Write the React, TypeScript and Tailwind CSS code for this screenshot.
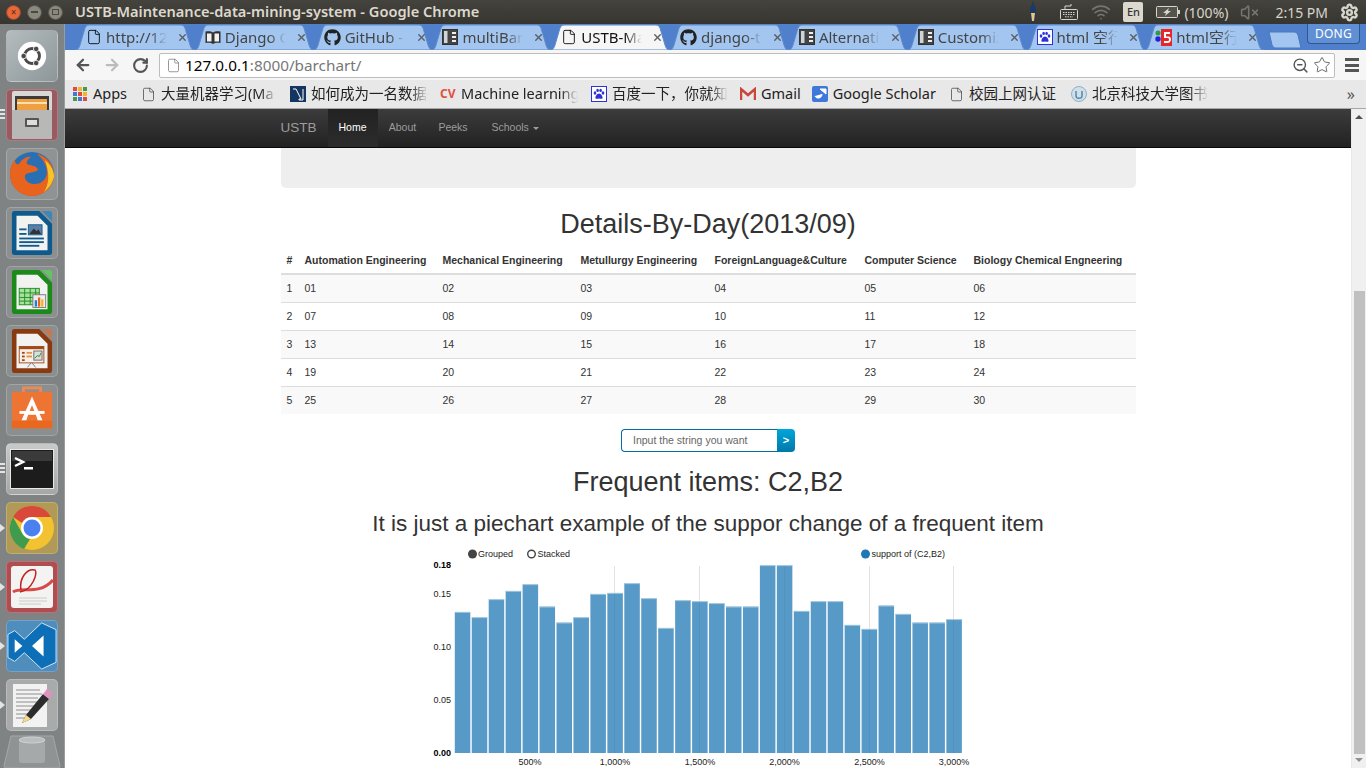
import type { ReactNode } from "react";
import { ArrowLeft, ArrowRight, RotateCw, Star, ZoomOut, File, Wifi, X, VolumeX, Settings } from "lucide-react";
import { FaGithub } from "react-icons/fa";

const uiFont = "font-['Noto_Sans','Noto_Sans_CJK_SC',sans-serif]";
const pageFont = "font-['Liberation_Sans',Arial,sans-serif]";

function Columns() {
  return (
    <svg width="16" height="16" viewBox="0 0 16 16" className="shrink-0">
      <rect x="0.5" y="0.5" width="15" height="15" fill="#444" stroke="#333" />
      <rect x="2" y="2" width="3.5" height="12" fill="#cfd4d8" />
      <rect x="10" y="3" width="4" height="2" fill="#eee" />
      <rect x="10" y="7" width="4" height="2" fill="#eee" />
      <rect x="10" y="11" width="4" height="2" fill="#eee" />
    </svg>
  );
}

function Book() {
  return (
    <svg width="16" height="16" viewBox="0 0 16 16" className="shrink-0">
      <path d="M8 3.500C6 2 3.500 2 0.500 2.500V14C3.500 13.500 6 13.500 8 15C10 13.500 12.500 13.500 15.500 14V2.500C12.500 2 10 2 8 3.500Z" fill="#333" />
      <path d="M2 4.500H6.500V12.500H2ZM9.500 4.500H14V12.500H9.500Z" fill="#f2f2f2" />
    </svg>
  );
}

function Paw({ size = 16 }: { size?: number }) {
  return (
    <svg width={size} height={size} viewBox="0 0 16 16" className="shrink-0">
      <rect x="0.500" y="0.500" width="15" height="15" fill="#fff" stroke="#2a32d8" />
      <g fill="#2a32d8">
        <ellipse cx="4" cy="7" rx="1.300" ry="1.700" />
        <ellipse cx="6.600" cy="4.400" rx="1.300" ry="1.700" />
        <ellipse cx="9.600" cy="4.400" rx="1.300" ry="1.700" />
        <ellipse cx="12" cy="7" rx="1.300" ry="1.700" />
        <path d="M8 7.500c2 0 4 3 3.500 4.500S9 12.500 8 12.500 5 13.500 4.500 12 6 7.500 8 7.500z" />
      </g>
    </svg>
  );
}

function Html5() {
  return (
    <svg width="17" height="17" viewBox="0 0 17 17" className="shrink-0">
      <rect x="6" y="0" width="11" height="17" fill="#e8262a" />
      <path d="M9 3h6v2h-4v2.500h2.500c2 0 2.500 1.500 2.500 3s-1 3.500-3.500 3.500H9v-2h3.500c1 0 1.500-.5 1.500-1.500s-.5-1.500-1.500-1.500H9z" fill="#fff" />
      <circle cx="3" cy="4" r="2.500" fill="#2d9e3c" />
      <circle cx="3" cy="10" r="2.700" fill="#2222dd" />
    </svg>
  );
}

const tabs: { icon: ReactNode; title: string; active?: boolean }[] = [
  { icon: <File size={16} strokeWidth={1.300} className="shrink-0" />, title: "http://12" },
  { icon: <Book />, title: "Django O" },
  { icon: <FaGithub size={17} className="shrink-0 text-[#222]" />, title: "GitHub - a" },
  { icon: <Columns />, title: "multiBarC" },
  { icon: <File size={16} strokeWidth={1.300} className="shrink-0" />, title: "USTB-Mai", active: true },
  { icon: <FaGithub size={17} className="shrink-0 text-[#222]" />, title: "django-ta" },
  { icon: <Columns />, title: "Alternativ" },
  { icon: <Columns />, title: "Customiz" },
  { icon: <Paw />, title: "html 空行" },
  { icon: <Html5 />, title: "html空行" },
];

function Tab({ icon, title, active }: { icon: ReactNode; title: string; active?: boolean }) {
  return (
    <div className={`relative h-[26px] w-[120px] -mr-[1.200px] shrink-0 flex items-center pl-[11px] ${active ? "z-10" : ""}`}>
      <svg className="absolute inset-0" width="120" height="26" viewBox="0 0 120 26">
        <path
          d="M0 26C3 26 4 24 5 21L10 4C11 2 12 1 14 1H106C108 1 109 2 110 4L115 21C116 24 117 26 120 26Z"
          fill={active ? "#f6f6f6" : "#a3c6f1"}
          stroke="#5f8ac8"
        />
      </svg>
      <div className="relative flex items-center gap-[4px]">
        {icon}
        <span
          className={`w-[61px] overflow-hidden whitespace-nowrap text-[15px] [mask-image:linear-gradient(90deg,#000_72%,transparent)] ${active ? "text-[#111]" : "text-[#444]"}`}
        >
          {title}
        </span>
      </div>
      <X size={11} strokeWidth={3} className="relative ml-[10px] text-[#5a5f66]" />
    </div>
  );
}

function Bookmark({ icon, label, w, ml }: { icon: ReactNode; label: string; w?: string; ml?: string }) {
  return (
    <div className={`flex items-center gap-[5px] shrink-0 ${ml ?? ""}`}>
      {icon}
      <span className={`whitespace-nowrap overflow-hidden text-[14.500px] text-[#222] ${w ?? ""} ${w ? "[mask-image:linear-gradient(90deg,#000_85%,transparent)]" : ""}`}>
        {label}
      </span>
    </div>
  );
}

function Tile({ bg, pip, arrow, children }: { bg: string; pip?: boolean; arrow?: boolean; children: ReactNode }) {
  return (
    <div className="relative">
      <div className={`w-[52px] h-[52px] rounded-[5px] border border-white/20 flex items-center justify-center overflow-hidden ${bg}`}>{children}</div>
      {arrow && <div className="absolute -left-[6px] top-[22px] w-0 h-0 border-y-[4px] border-y-transparent border-l-[5px] border-l-[#e4e4e4]" />}
      {pip && (
        <div className="absolute -left-[6px] top-[20px] flex flex-col gap-[2px]">
          <div className="w-[5px] h-[2px] bg-[#e4e4e4]" />
          <div className="w-[5px] h-[2px] bg-[#e4e4e4]" />
          <div className="w-[5px] h-[2px] bg-[#e4e4e4]" />
        </div>
      )}
    </div>
  );
}

function OfficeDoc({ color, corner, children }: { color: string; corner: string; children: ReactNode }) {
  return (
    <svg width="42" height="50" viewBox="0 0 46 50">
      <path d="M4 1H31L45 15V46Q45 49 42 49H4Q1 49 1 46V4Q1 1 4 1Z" fill={color} />
      <path d="M6 6H29L40 17V44H6Z" fill="#f2f2f0" />
      <path d="M34 1H42Q45 1 45 4V12Z" fill={corner} />
      {children}
    </svg>
  );
}

function Launcher() {
  return (
    <aside className="w-[65px] shrink-0 h-full bg-[#7f8384] border-r border-[#9a9d9d] flex flex-col items-center pt-[6px] gap-[7px] relative">
      <Tile bg="bg-gradient-to-br from-[#b4bcbe] to-[#8d9698]">
        <svg width="30" height="30" viewBox="0 0 36 36">
          <circle cx="18" cy="18" r="17" fill="#fff" />
          <circle cx="18" cy="18" r="9" fill="none" stroke="#4a4a4a" strokeWidth="3.500" />
          <circle cx="8" cy="18" r="3.300" fill="#4a4a4a" stroke="#fff" />
          <circle cx="23" cy="9.500" r="3.300" fill="#4a4a4a" stroke="#fff" />
          <circle cx="23" cy="26.500" r="3.300" fill="#4a4a4a" stroke="#fff" />
        </svg>
      </Tile>
      <Tile bg="bg-[#9a5a62]" pip>
        <svg width="42" height="48" viewBox="0 0 42 48">
          <rect x="1" y="0" width="40" height="48" rx="2" fill="#d8d8d6" />
          <rect x="4" y="5" width="34" height="15" fill="#3c3c3c" />
          <rect x="6" y="8" width="30" height="11" fill="#f0a040" />
          <rect x="6" y="11" width="30" height="2" fill="#f8e0b0" />
          <rect x="1" y="19" width="40" height="29" fill="#b8b8b6" />
          <rect x="14" y="27" width="14" height="9" rx="1" fill="#555" />
          <rect x="16" y="29" width="10" height="5" fill="#ddd" />
        </svg>
      </Tile>
      <Tile bg="bg-[#8f9394]">
        <svg width="46" height="46" viewBox="0 0 46 46">
          <circle cx="23" cy="23" r="22" fill="#2a6fb4" />
          <path d="M28 3C38 5 45 14 45 24C45 36 35 45 23 45C10 45 1 35 1 23C1 17 3 12 6 9C6 13 8 14 10 13C13 8 18 5 22 6C19 8 17 11 18 13C22 15 28 14 29 19C25 22 20 21 17 23C14 26 17 32 24 33C32 34 38 28 38 21C38 14 33 7 28 3Z" fill="#e8641e" />
          <path d="M36 9C42 14 45 20 45 26C43 33 40 37 35 41C40 33 41 24 36 9Z" fill="#f7c325" />
        </svg>
      </Tile>
      <Tile bg="bg-[#8b8f90]">
        <OfficeDoc color="#0e5a8c" corner="#3f86b8">
          <rect x="9" y="20" width="8" height="2" fill="#0e5a8c" />
          <rect x="9" y="25" width="8" height="2" fill="#0e5a8c" />
          <rect x="19" y="16" width="15" height="11" fill="#5a7fa8" stroke="#0e5a8c" />
          <path d="M20 26l5-6 3 3 2-2 3 5z" fill="#333" />
          <rect x="9" y="30" width="27" height="2" fill="#0e5a8c" />
          <rect x="9" y="34" width="27" height="2" fill="#0e5a8c" />
          <rect x="9" y="38" width="22" height="2" fill="#0e5a8c" />
        </OfficeDoc>
      </Tile>
      <Tile bg="bg-[#8b8f90]">
        <OfficeDoc color="#1b8a1b" corner="#63c463">
          <rect x="9" y="21" width="22" height="18" fill="#a8e0a0" stroke="#1b8a1b" />
          <path d="M9 26H31M9 31H31M9 35H31M15 21V39M21 21V39M27 21V39" stroke="#1b8a1b" fill="none" />
          <rect x="24" y="28" width="14" height="14" fill="#eee" stroke="#777" />
          <rect x="26" y="34" width="2.500" height="7" fill="#1c7ed6" />
          <rect x="29.500" y="31" width="2.500" height="10" fill="#e8641e" />
          <rect x="33" y="33" width="2.500" height="8" fill="#f7b325" />
        </OfficeDoc>
      </Tile>
      <Tile bg="bg-[#8b8f90]">
        <OfficeDoc color="#8a3a10" corner="#c47a50">
          <rect x="9" y="20" width="27" height="18" fill="#f7f0e8" stroke="#a04a18" />
          <rect x="9" y="20" width="27" height="3" fill="#a04a18" />
          <rect x="12" y="26" width="3" height="2" fill="#a04a18" />
          <rect x="12" y="30" width="3" height="2" fill="#a04a18" />
          <rect x="12" y="34" width="3" height="2" fill="#a04a18" />
          <rect x="17" y="26" width="6" height="2" fill="#e8904a" />
          <rect x="17" y="30" width="6" height="2" fill="#e8904a" />
          <rect x="25" y="25" width="9" height="10" fill="#ddd" stroke="#666" />
          <path d="M26 33l3-3 2 1 2-4" stroke="#1b8a1b" fill="none" />
          <path d="M22 38l-4 5M23 38l4 5" stroke="#777" />
        </OfficeDoc>
      </Tile>
      <Tile bg="bg-[#8b8f90]">
        <svg width="52" height="52" viewBox="0 0 52 52">
          <path d="M17 9V3H35V9" fill="none" stroke="#f08a54" strokeWidth="3" />
          <rect x="5" y="7" width="42" height="38" fill="#ee7434" />
          <path d="M26 12L37 37H32L30 31H22L20 37H15ZM23.500 27H28.500L26 21Z" fill="#fff" />
          <rect x="13" y="27" width="26" height="3" fill="#fff" />
          <rect x="5" y="37" width="42" height="8" fill="#e8681f" />
        </svg>
      </Tile>
      <Tile bg="bg-gradient-to-b from-[#c8c9c9] to-[#a5a7a7]" pip>
        <svg width="44" height="40" viewBox="0 0 44 40">
          <rect x="0.500" y="0.500" width="43" height="39" fill="#1c1c1c" stroke="#e8e8e8" />
          <rect x="2" y="2" width="40" height="10" fill="#3a3a3a" />
          <path d="M5 9L13 13L5 17" fill="none" stroke="#fff" strokeWidth="2.500" />
          <rect x="14" y="18" width="9" height="2.500" fill="#fff" />
        </svg>
      </Tile>
      <Tile bg="bg-[#b19a55]" arrow>
        <svg width="46" height="46" viewBox="0 0 46 46">
          <circle cx="23" cy="23" r="22" fill="#f2c230" />
          <path d="M23 1A22 22 0 0 1 42 12H23A11 11 0 0 0 13 18L4 12A22 22 0 0 1 23 1Z" fill="#d9483b" />
          <path d="M4 12L13 28A11 11 0 0 0 21 34L15 44A22 22 0 0 1 4 12Z" fill="#3f9c4f" />
          <circle cx="23" cy="23" r="11" fill="#fff" />
          <circle cx="23" cy="23" r="8.500" fill="#4a80f0" />
        </svg>
      </Tile>
      <Tile bg="bg-[#b04d50]" arrow>
        <svg width="42" height="42" viewBox="0 0 42 42">
          <rect x="0" y="0" width="42" height="42" rx="3" fill="#f3f3f1" />
          <path d="M2 26C10 20 28 30 42 14" fill="none" stroke="#d84a4a" strokeWidth="3" />
          <path d="M10 24C8 12 16 2 24 4C27 6 22 24 9 26" fill="none" stroke="#c32020" strokeWidth="1.500" />
          <path d="M8 32H36M8 35H36M8 38H30" stroke="#ccc" />
        </svg>
      </Tile>
      <Tile bg="bg-[#4f8dbd]" arrow>
        <svg width="52" height="52" viewBox="0 0 52 52">
          <path d="M36 2L51 9V43L36 50L18 33L8 42L1 38V14L8 10L18 19Z" fill="#0c6fb8" stroke="#d6e8f4" />
          <path d="M8 19L16 26L8 33Z" fill="#fff" />
          <path d="M38 15V37L26 26Z" fill="#fff" />
        </svg>
      </Tile>
      <Tile bg="bg-[#a9abab]" arrow>
        <svg width="44" height="46" viewBox="0 0 44 46">
          <rect x="3" y="2" width="34" height="43" fill="#f2f2f2" />
          <path d="M6 8H30M6 12H32M6 16H28M6 20H32M6 24H26M6 28H24M6 32H18M6 36H16" stroke="#777" strokeWidth="0.800" />
          <path d="M12 41L16 33L33 12L39 17L21 37Z" fill="#2c2c2c" />
          <path d="M33 12L37 7L42 11L39 17Z" fill="#e58fc0" />
          <path d="M12 41L16 33L21 37Z" fill="#f6dc8a" />
        </svg>
      </Tile>
      <svg width="58" height="34" viewBox="0 0 58 34" className="absolute left-[3px] bottom-0">
        <path d="M8 2H50L57 32Q57 34 55 34H3Q1 34 1 32Z" fill="#8f9394" stroke="#a5a8a8" />
        <path d="M16 5H42V26Q42 29 39 29H19Q16 29 16 26Z" fill="#a6a9a9" />
        <ellipse cx="29" cy="6" rx="13" ry="3" fill="#bcbebe" stroke="#d0d2d2" />
      </svg>
    </aside>
  );
}

function TopBar() {
  return (
    <div className={`h-6 shrink-0 flex items-center bg-gradient-to-b from-[#45433e] to-[#37352f] ${uiFont}`}>
      <div className="flex items-center gap-[6px] pl-[6px] w-[75px]">
        <div className="w-[15px] h-[15px] rounded-full bg-[#e8683a] border border-[#8a4a30] flex items-center justify-center text-[10px] leading-none text-[#5a2a18]">×</div>
        <div className="w-[15px] h-[15px] rounded-full bg-[#8b887e] border border-[#55534c] flex items-center justify-center"><div className="w-[7px] h-[2px] bg-[#4a4842]" /></div>
        <div className="w-[15px] h-[15px] rounded-full bg-[#8b887e] border border-[#55534c] flex items-center justify-center"><div className="w-[7px] h-[6px] border border-[#4a4842]" /></div>
      </div>
      <span className="text-[14.600px] font-semibold text-[#dcd8cd] whitespace-nowrap">USTB-Maintenance-data-mining-system - Google Chrome</span>
      <div className="ml-auto flex items-center h-full text-[#d8d5cc]">
        <svg width="12" height="22" viewBox="0 0 12 22" className="mr-[20px]">
          <path d="M6 0L9 8L8 20L6 22L4 20L3 8Z" fill="#1c3a66" />
          <path d="M4 12L5 20H7L8 12Z" fill="#e8c680" />
        </svg>
        <svg width="20" height="18" viewBox="0 0 20 18" fill="none" stroke="#d8d5cc" className="mr-[12px]">
          <rect x="1.500" y="6.500" width="17" height="10" rx="1" />
          <path d="M6 6V3H12V1" />
          <path d="M4 9.500H16M4 11.500H16M6 13.800H14" strokeDasharray="1.500 1" />
        </svg>
        <Wifi size={20} strokeWidth={2} className="text-[#77746c] mr-[12px]" />
        <div className="w-[20px] h-[20px] bg-[#dcd8ce] rounded-[2px] text-[#333] text-[11px] font-medium flex items-center justify-center mr-[13px]">En</div>
        <svg width="24" height="14" viewBox="0 0 24 14" className="mr-[4px]">
          <rect x="0.500" y="1.500" width="21" height="11" rx="1" fill="#55534c" stroke="#d8d5cc" />
          <rect x="22" y="5" width="2" height="4" fill="#d8d5cc" />
          <path d="M13 3L7 8H10L9 11L15 6H12Z" fill="#d8d5cc" />
        </svg>
        <span className="text-[14px] w-[52px]">(100%)</span>
        <VolumeX size={19} className="text-[#77746c] mr-[16px] ml-[4px]" />
        <span className="text-[14px] whitespace-nowrap">2:15 PM</span>
        <Settings size={19} strokeWidth={3} className="ml-[12px] mr-[7px]" />
      </div>
    </div>
  );
}

function ChromeBar() {
  return (
    <div className={`shrink-0 ${uiFont}`}>
      <div className="relative h-[26px] bg-[#5080cc] flex pl-[10px] overflow-hidden">
        {tabs.map((t) => (
          <Tab key={t.title} icon={t.icon} title={t.title} active={t.active} />
        ))}
        <svg width="34" height="18" viewBox="0 0 34 18" className="ml-[5px] mt-[7px] shrink-0">
          <path d="M1 1H26C28 1 29 2 30 4L33 17H8C6 17 5 16 4 14Z" fill="#a3c6f1" stroke="#4a78bc" />
        </svg>
        <div className="absolute right-[6px] top-0 h-[20px] w-[53px] bg-[#5f8fd4] border border-[#31578f] border-t-0 rounded-b-[4px] text-[12px] tracking-wide text-white flex items-center justify-center">DONG</div>
      </div>
      <div className="h-[30px] bg-[#f6f6f6] flex items-center relative">
        <ArrowLeft size={18} strokeWidth={3} className="ml-[9px] text-[#555]" />
        <ArrowRight size={18} strokeWidth={3} className="ml-[11px] text-[#bcbcbc]" />
        <RotateCw size={17} strokeWidth={3} className="ml-[11px] text-[#555]" />
        <div className="ml-[10px] h-[25px] w-[1176px] bg-white border border-[#bdbdbd] rounded-[2px] flex items-center pl-[6px]">
          <File size={15} strokeWidth={1.200} className="text-[#777]" />
          <span className="ml-[4px] text-[15.300px]"><span className="text-black">127.0.0.1</span><span className="text-[#777]">:8000/barchart/</span></span>
          <ZoomOut size={17} strokeWidth={2} className="ml-auto text-[#555]" />
          <Star size={18} strokeWidth={1.300} className="ml-[4px] mr-[3px] text-[#666]" />
        </div>
        <div className="ml-[10px] flex flex-col gap-[2.500px]">
          <div className="w-[14px] h-[3px] bg-[#555]" />
          <div className="w-[14px] h-[3px] bg-[#555]" />
          <div className="w-[14px] h-[3px] bg-[#555]" />
        </div>
      </div>
      <div className="h-[29px] bg-[#e8e8e8] border-b border-[#a8a8a8] flex items-center pl-[8px] pr-[10px] relative">
        <div className="flex items-center gap-[12px]">
          <div className="flex items-center gap-[6px] w-[56px]">
            <div className="grid grid-cols-3 gap-[1px] w-[14px]">
              {["#e04a3f", "#f2b52e", "#3f9c4f", "#3f78d8", "#e04a3f", "#f2b52e", "#3f9c4f", "#3f78d8", "#e04a3f"].map((c, i) => (
                <div key={i} className="w-[4px] h-[4px]" style={{ backgroundColor: c }} />
              ))}
            </div>
            <span className="text-[14.500px] text-[#222]">Apps</span>
          </div>
          <Bookmark icon={<File size={15} strokeWidth={1.200} className="text-[#444]" />} label="大量机器学习(Ma" w="w-[116px]" />
          <Bookmark
            ml="ml-[1px]"
            icon={
              <svg width="16" height="16" viewBox="0 0 16 16">
                <rect width="16" height="16" fill="#14355f" />
                <path d="M3 3H6L11 13H9V14H13V3" fill="none" stroke="#fff" />
              </svg>
            }
            label="如何成为一名数据"
            w="w-[117px]"
          />
          <Bookmark icon={<span className="text-[12px] font-bold text-[#e0503c] w-[16px]">CV</span>} label="Machine learning" w="w-[117px]" />
          <Bookmark ml="ml-[1px]" icon={<Paw />} label="百度一下，你就知" w="w-[116px]" />
          <Bookmark
            icon={
              <svg width="16" height="14" viewBox="0 0 16 14">
                <path d="M1 13V2L8 8L15 2V13" fill="none" stroke="#c9463c" strokeWidth="2.500" />
              </svg>
            }
            label="Gmail"
          />
          <Bookmark
            ml="-ml-[1px]"
            icon={
              <svg width="16" height="16" viewBox="0 0 16 16">
                <rect width="16" height="16" rx="2" fill="#3f78d8" />
                <path d="M8 3L14 8V3ZM10 8C10 13 4 13 3 10" fill="#fff" stroke="#fff" />
              </svg>
            }
            label="Google Scholar"
          />
          <Bookmark ml="ml-[1px]" icon={<File size={15} strokeWidth={1.200} className="text-[#444]" />} label="校园上网认证" />
          <Bookmark
            ml="ml-[3px]"
            icon={
              <svg width="16" height="16" viewBox="0 0 16 16">
                <circle cx="8" cy="8" r="7.500" fill="#cfe0ea" stroke="#8eb0c6" />
                <path d="M5 5V10C5 13 11 13 11 10V5" fill="none" stroke="#5a88a8" strokeWidth="1.500" />
              </svg>
            }
            label="北京科技大学图书"
            w="w-[116px]"
          />
        </div>
        <span className="absolute right-[11px] text-[16px] text-[#555]">»</span>
      </div>
    </div>
  );
}

const headers = ["#", "Automation Engineering", "Mechanical Engineering", "Metullurgy Engineering", "ForeignLanguage&Culture", "Computer Science", "Biology Chemical Engneering"];
const rows = [
  ["1", "01", "02", "03", "04", "05", "06"],
  ["2", "07", "08", "09", "10", "11", "12"],
  ["3", "13", "14", "15", "16", "17", "18"],
  ["4", "19", "20", "21", "22", "23", "24"],
  ["5", "25", "26", "27", "28", "29", "30"],
];

function DetailsTable() {
  return (
    <table className="w-full table-fixed border-collapse text-[10.500px] text-[#333]">
      <colgroup>
        <col className="w-[18px]" />
        <col className="w-[138px]" />
        <col className="w-[138px]" />
        <col className="w-[134px]" />
        <col className="w-[150px]" />
        <col className="w-[109px]" />
        <col className="w-[168px]" />
      </colgroup>
      <thead>
        <tr className="h-[28px] border-b-2 border-[#ddd]">
          {headers.map((h) => (
            <th key={h} className="pl-[6px] pt-[3px] text-left font-bold whitespace-nowrap">{h}</th>
          ))}
        </tr>
      </thead>
      <tbody>
        {rows.map((r, i) => (
          <tr key={r[0]} className={`h-[28px] ${i < 4 ? "border-b border-[#ddd]" : ""} ${i % 2 === 0 ? "bg-[#f9f9f9]" : ""}`}>
            {r.map((c) => (
              <td key={c} className="pl-[6px] pt-[1px]">{c}</td>
            ))}
          </tr>
        ))}
      </tbody>
    </table>
  );
}

const barTops = [216, 232, 178, 153, 133, 200, 248, 232, 162, 159, 130, 175, 264, 181, 184, 190, 200, 200, 76, 76, 213, 184, 184, 255, 267, 197, 222, 248, 248, 238];

function Chart() {
  const label = "font-['Liberation_Sans',Arial,sans-serif]";
  return (
    <svg width="580" height="223" viewBox="420 545 580 223" className={`block ${label}`} fontSize="9" fill="#222">
      <circle cx="472.500" cy="554" r="4.500" fill="#444" />
      <text x="478" y="557">Grouped</text>
      <circle cx="531.500" cy="554" r="3.800" fill="#fff" stroke="#444" strokeWidth="1.400" />
      <text x="537.500" y="557">Stacked</text>
      <circle cx="865.500" cy="554" r="4.500" fill="#1f77b4" />
      <text x="871.500" y="557">support of (C2,B2)</text>
      {[614.500, 699.500, 784.500, 869.500, 953.500].map((x) => (
        <line key={x} x1={x} x2={x} y1="566" y2="753" stroke="#e2e2e2" />
      ))}
      {barTops.map((t, i) => {
        const x = 454.800 + i * 16.950;
        const y = 540 + t / 3;
        return (
          <g key={i}>
            <rect x={x} y={y} width="15.500" height={753 - y} fill="#1f77b4" fillOpacity="0.75" />
            <line x1={x} x2={x + 15.500} y1={y + 0.300} y2={y + 0.300} stroke="#a9cbe2" />
          </g>
        );
      })}
      <g textAnchor="end">
        <text x="451" y="568" fontWeight="bold" fill="#000">0.18</text>
        <text x="451" y="597">0.15</text>
        <text x="451" y="650">0.10</text>
        <text x="451" y="703">0.05</text>
        <text x="451" y="756" fontWeight="bold" fill="#000">0.00</text>
      </g>
      <g textAnchor="middle">
        <text x="530" y="765">500%</text>
        <text x="615" y="765">1,000%</text>
        <text x="700" y="765">1,500%</text>
        <text x="784.500" y="765">2,000%</text>
        <text x="869.500" y="765">2,500%</text>
        <text x="954" y="765">3,000%</text>
      </g>
    </svg>
  );
}

function Page() {
  return (
    <div className={`flex-1 min-w-0 overflow-hidden flex flex-col items-center ${pageFont}`}>
      <nav className="w-full h-[39px] shrink-0 bg-gradient-to-b from-[#3c3c3c] to-[#222] border-b border-[#080808] flex justify-center">
        <div className="w-[855px] flex text-[10.500px] text-[#9d9d9d]">
          <span className="text-[13.500px] flex items-center w-[47px]">USTB</span>
          <span className="w-[50px] bg-gradient-to-b from-[#222] to-[#2c2c2c] text-white flex items-center justify-center">Home</span>
          <span className="w-[50px] flex items-center justify-center">About</span>
          <span className="w-[51px] flex items-center justify-center">Peeks</span>
          <span className="ml-[13px] flex items-center gap-[4px]">
            Schools
            <span className="w-0 h-0 border-x-[3px] border-x-transparent border-t-[3px] border-t-[#9d9d9d]" />
          </span>
        </div>
      </nav>
      <div className="w-[855px] shrink-0 h-[40px] bg-[#eee] rounded-b-[5px]" />
      <h1 className="mt-[20px] text-[27px] leading-[32px] text-[#333]">Details-By-Day(2013/09)</h1>
      <div className="w-[855px] mt-[6px]">
        <DetailsTable />
      </div>
      <div className="mt-[15px] flex h-[24px] text-[10.500px]">
        <div className="w-[156px] border border-[#00719c] border-r-0 rounded-l-[4px] bg-white text-[#666] flex items-center pl-[11px]">Input the string you want</div>
        <div className="w-[18px] rounded-r-[4px] bg-gradient-to-b from-[#00a6dc] to-[#0078a8] text-white font-bold text-[11px] flex items-center justify-center">&gt;</div>
      </div>
      <h1 className="mt-[14px] text-[27px] leading-[32px] text-[#333]">Frequent items: C2,B2</h1>
      <h2 className="mt-[12px] text-[22.500px] leading-[28px] text-[#333]">It is just a piechart example of the suppor change of a frequent item</h2>
      <div className="mt-[7px] ml-[3px]">
        <Chart />
      </div>
    </div>
  );
}

function Scrollbar() {
  return (
    <div className="w-[15px] shrink-0 h-full bg-[#f0f0f0] border-l border-[#e8e8e8] flex flex-col items-center">
      <div className="mt-[6px] w-0 h-0 border-x-[4px] border-x-transparent border-b-[4px] border-b-[#505050]" />
      <div className="mt-[172px] w-[11px] h-[463px] bg-[#c0c0c0]" />
      <div className="mt-[4px] w-0 h-0 border-x-[4px] border-x-transparent border-t-[4px] border-t-[#909090]" />
    </div>
  );
}

export default function App() {
  return (
    <div className="w-[1366px] h-[768px] overflow-hidden flex flex-col bg-white">
      <TopBar />
      <div className="flex-1 min-h-0 flex">
        <Launcher />
        <div className="flex-1 min-w-0 flex flex-col">
          <ChromeBar />
          <div className="flex-1 min-h-0 flex">
            <Page />
            <Scrollbar />
          </div>
        </div>
      </div>
    </div>
  );
}
